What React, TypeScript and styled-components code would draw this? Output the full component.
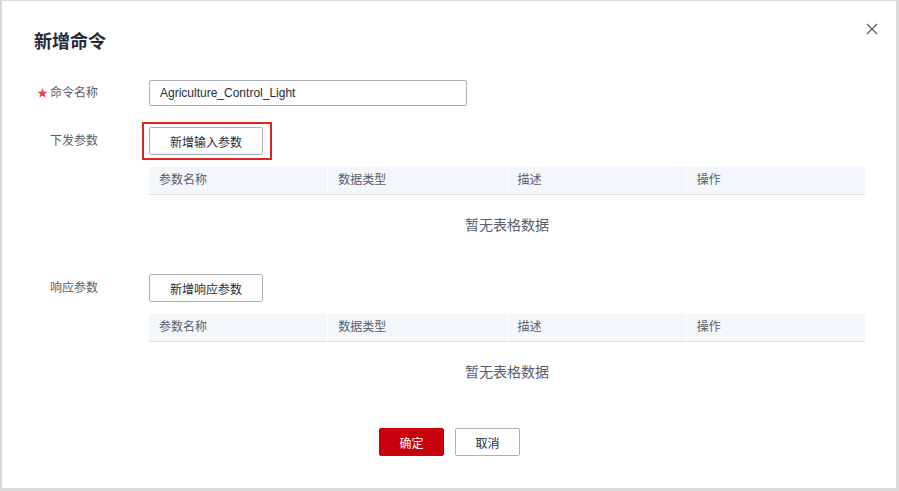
import React from 'react';
import styled, {createGlobalStyle} from 'styled-components';

const GlobalStyle = createGlobalStyle`
  html, body {
    margin: 0;
    padding: 0;
    background: #d9d9d9;
  }
  body {
    font-family: 'Liberation Sans', 'Noto Sans CJK SC', sans-serif;
    font-size: 12px;
    color: #575d6c;
  }
`;

const Dialog = styled.div`
  position: relative;
  box-sizing: border-box;
  width: 894px;
  height: 487px;
  margin: 1px 3px 3px 2px;
  background: #fff;
  padding: 28px 32px 0 32px;
`;

const Title = styled.h2`
  margin: 0;
  font-size: 18px;
  line-height: 26px;
  font-weight: 700;
  color: #252b3a;
`;

const Close = styled.button`
  position: absolute;
  top: 20px;
  right: 16px;
  width: 16px;
  height: 16px;
  padding: 0;
  border: none;
  background: none;
  display: flex;
  align-items: center;
  justify-content: center;
`;

const Form = styled.div`
  margin-top: 25px;
  display: flex;
  flex-direction: column;
`;

const Row = styled.div<{$top?: number}>`
  display: flex;
  align-items: flex-start;
  margin-top: ${p => p.$top ?? 0}px;
`;

const Label = styled.div<{$h: number}>`
  width: 115px;
  flex-shrink: 0;
  box-sizing: border-box;
  padding-left: 16px;
  height: ${p => p.$h}px;
  line-height: ${p => p.$h}px;
  color: #575d6c;
  font-size: 12px;
`;

const Star = styled.span`
  display: inline-block;
  width: 13px;
  margin-left: -13px;
  color: #e54545;
  font-size: 11px;
`;

const Field = styled.div`
  flex: 1;
  display: flex;
  flex-direction: column;
  align-items: flex-start;
`;

const Input = styled.input`
  box-sizing: border-box;
  width: 318px;
  height: 26px;
  border: 1px solid #adb0b8;
  border-radius: 2px;
  padding: 0 10px;
  font-family: 'Liberation Sans', 'Noto Sans CJK SC', sans-serif;
  font-size: 12px;
  color: #252b3a;
  outline: none;
`;

const Highlight = styled.div`
  position: relative;
  &::after {
    content: '';
    position: absolute;
    left: -7px;
    top: -5px;
    right: -9px;
    bottom: -5px;
    border: 2px solid #e02424;
    pointer-events: none;
  }
`;

const Button = styled.button<{$primary?: boolean; $w?: number}>`
  box-sizing: border-box;
  width: ${p => p.$w ?? 114}px;
  height: 28px;
  border-radius: 2px;
  border: 1px solid ${p => (p.$primary ? '#c7000b' : '#adb0b8')};
  background: ${p => (p.$primary ? '#c7000b' : '#fff')};
  color: ${p => (p.$primary ? '#fff' : '#252b3a')};
  font-family: 'Liberation Sans', 'Noto Sans CJK SC', sans-serif;
  font-size: 12px;
  padding: 0;
  cursor: pointer;
`;

const Table = styled.div`
  margin-top: 12px;
  width: 716px;
`;

const HeaderRow = styled.div`
  display: grid;
  grid-template-columns: repeat(4, 1fr);
  column-gap: 1px;
  background: #fff;
  border-bottom: 1px solid #dfe1e6;
`;

const HeaderCell = styled.div`
  height: 27px;
  line-height: 27px;
  padding-left: 10px;
  background: #f3f6fb;
  color: #575d6c;
  font-size: 12px;
`;

const Empty = styled.div`
  height: 58px;
  display: flex;
  align-items: center;
  justify-content: center;
  font-size: 14px;
  color: #575d6c;
`;

const Footer = styled.div`
  margin-top: 28px;
  display: flex;
  justify-content: center;
  gap: 11px;
  padding-left: 1px;
`;

const columns = ['参数名称', '数据类型', '描述', '操作'];

const ParamTable = () => (
    <Table>
        <HeaderRow>
            {columns.map(c => (
                <HeaderCell key={c}>{c}</HeaderCell>
            ))}
        </HeaderRow>
        <Empty>暂无表格数据</Empty>
    </Table>
);

const App = () => {
    return (
        <>
            <GlobalStyle/>
            <Dialog>
                <Title>新增命令</Title>
                <Close aria-label="close">
                    <svg width="12" height="12" viewBox="0 0 12 12">
                        <path d="M1 1L11 11M11 1L1 11" stroke="#575d6c" strokeWidth="1.3" fill="none"/>
                    </svg>
                </Close>
                <Form>
                    <Row>
                        <Label $h={26}><Star>★</Star>命令名称</Label>
                        <Field>
                            <Input defaultValue="Agriculture_Control_Light"/>
                        </Field>
                    </Row>
                    <Row $top={21}>
                        <Label $h={28}>下发参数</Label>
                        <Field>
                            <Highlight>
                                <Button>新增输入参数</Button>
                            </Highlight>
                            <ParamTable/>
                        </Field>
                    </Row>
                    <Row $top={21}>
                        <Label $h={28}>响应参数</Label>
                        <Field>
                            <Button>新增响应参数</Button>
                            <ParamTable/>
                        </Field>
                    </Row>
                </Form>
                <Footer>
                    <Button $primary $w={65}>确定</Button>
                    <Button $w={65}>取消</Button>
                </Footer>
            </Dialog>
        </>
    );
};

export default App;
